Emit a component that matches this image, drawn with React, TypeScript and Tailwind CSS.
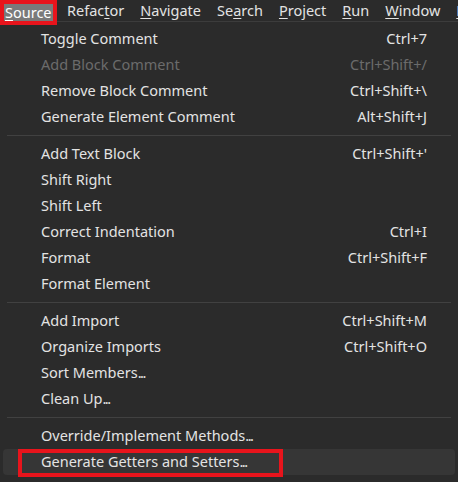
import React from "react";

type Entry =
  | { kind: "item"; label: string; shortcut?: string; disabled?: boolean; active?: boolean }
  | { kind: "sep" };

const menuBar: { pre: string; key: string; post: string }[] = [
  { pre: "Refac", key: "t", post: "or" },
  { pre: "", key: "N", post: "avigate" },
  { pre: "Se", key: "a", post: "rch" },
  { pre: "", key: "P", post: "roject" },
  { pre: "", key: "R", post: "un" },
  { pre: "", key: "W", post: "indow" },
  { pre: "", key: "H", post: "elp" },
];

const entries: Entry[] = [
  { kind: "item", label: "Toggle Comment", shortcut: "Ctrl+7" },
  { kind: "item", label: "Add Block Comment", shortcut: "Ctrl+Shift+/", disabled: true },
  { kind: "item", label: "Remove Block Comment", shortcut: "Ctrl+Shift+\\" },
  { kind: "item", label: "Generate Element Comment", shortcut: "Alt+Shift+J" },
  { kind: "sep" },
  { kind: "item", label: "Add Text Block", shortcut: "Ctrl+Shift+'" },
  { kind: "item", label: "Shift Right" },
  { kind: "item", label: "Shift Left" },
  { kind: "item", label: "Correct Indentation", shortcut: "Ctrl+I" },
  { kind: "item", label: "Format", shortcut: "Ctrl+Shift+F" },
  { kind: "item", label: "Format Element" },
  { kind: "sep" },
  { kind: "item", label: "Add Import", shortcut: "Ctrl+Shift+M" },
  { kind: "item", label: "Organize Imports", shortcut: "Ctrl+Shift+O" },
  { kind: "item", label: "Sort Members..." },
  { kind: "item", label: "Clean Up..." },
  { kind: "sep" },
  { kind: "item", label: "Override/Implement Methods..." },
  { kind: "item", label: "Generate Getters and Setters...", active: true },
];

// Windows menus draw "..." tighter than Noto Sans does; squeeze the dots a bit.
function Label({ text }: { text: string }) {
  if (!text.endsWith("...")) return <>{text}</>;
  return (
    <>
      {text.slice(0, -3)}
      <span className="tracking-[-1.5px]">...</span>
    </>
  );
}

export default function App() {
  return (
    <div className="relative h-[482px] w-[458px] overflow-hidden bg-[#2b2b2b] text-[14.5px] text-[#e3e3e3] [font-family:'Noto_Sans',sans-serif]">
      {/* Menu bar */}
      <div className="flex h-[22px] items-center gap-[16px] border-b border-[#3c3c3c]">
        <div className="h-full w-[57px] shrink-0 border-r border-[#4a4a4a]" />
        {menuBar.map((m, i) => (
          <span key={m.key + i} className={"shrink-0 whitespace-nowrap leading-none " + (i === 0 ? "-ml-[6px]" : "")}>
            {m.pre}
            <span className="underline underline-offset-2">{m.key}</span>
            {m.post}
          </span>
        ))}
      </div>

      {/* Source highlight with red annotation */}
      <div className="absolute left-0 top-0 h-[25px] w-[57px] border-4 border-[#e8141c] bg-[#7a7a7a]">
        <span className="absolute left-[1px] top-[-3px] whitespace-nowrap leading-[22px] text-white">
          <span className="underline underline-offset-2">S</span>ource
        </span>
      </div>

      {/* Dropdown */}
      <div className="flex flex-col pt-[4px]">
        {entries.map((e, i) =>
          e.kind === "sep" ? (
            <div key={i} className="flex h-[11px] items-center px-[7px]">
              <div className="h-px w-full bg-[#414141]" />
            </div>
          ) : (
            <div
              key={i}
              className={
                "mx-[3px] flex h-[26px] items-center justify-between rounded-[4px] pl-[38px] pr-[28px] " +
                (e.active ? "bg-[#363636]" : "")
              }
            >
              <span className={"whitespace-nowrap " + (e.disabled ? "text-[#6b6b6b]" : "")}>
                <Label text={e.label} />
              </span>
              {e.shortcut ? (
                <span className={"whitespace-nowrap " + (e.disabled ? "text-[#6b6b6b]" : "")}>{e.shortcut}</span>
              ) : null}
            </div>
          )
        )}
      </div>

      {/* Red annotation round the active item */}
      <div className="absolute left-[18px] top-[449px] h-[28px] w-[265px] border-4 border-[#e8141c]" />
    </div>
  );
}
